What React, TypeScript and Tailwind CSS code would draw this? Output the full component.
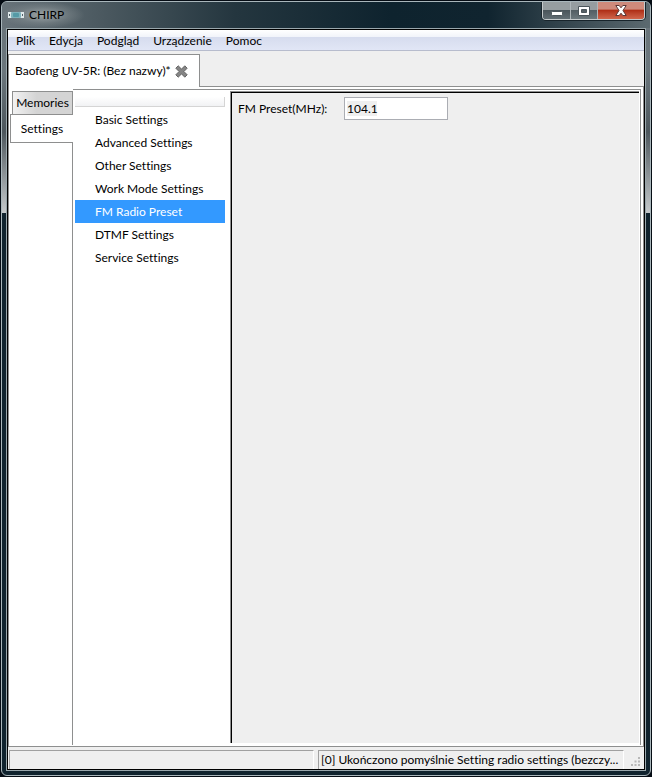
import { useState } from 'react';

const MENU_ITEMS = ['Plik', 'Edycja', 'Podgląd', 'Urządzenie', 'Pomoc'];

const CATEGORIES = [
  'Basic Settings',
  'Advanced Settings',
  'Other Settings',
  'Work Mode Settings',
  'FM Radio Preset',
  'DTMF Settings',
  'Service Settings',
];

function RadioIcon() {
  return (
    <svg width="16" height="8" viewBox="0 0 16 8" aria-hidden="true">
      <rect x="0" y="1" width="16" height="6" fill="#dfe8ea" />
      <rect x="3" y="1" width="10" height="6" rx="1" fill="#7fb2bb" />
      <rect x="5" y="2" width="6" height="4" rx="1" fill="#559aa6" />
      <path d="M1 3h1v2H1zM14 3h1v2h-1z" fill="#53646c" />
    </svg>
  );
}

function TitleBar() {
  return (
    <header className="flex h-[26px] shrink-0 items-start bg-[linear-gradient(90deg,#68737a,#4a585f_16%,#24363f_36%,#0e232e_60%,#10242f_75%,#5c6a70)]">
      <div className="flex h-full items-center gap-[5px] bg-[radial-gradient(ellipse_at_center,#9aa2a5_0%,#7e888c80_45%,transparent_72%)] pr-5 pl-[6px] text-black">
        <RadioIcon />
        <h1 className="leading-4">CHIRP</h1>
      </div>
      <div className="mr-[5px] ml-auto flex h-[18px] overflow-hidden rounded-b-[4px] border border-t-0 border-[#c5cacc] shadow-[0_0_0_1px_#18242b]">
        <button
          aria-label="Minimize"
          className="flex w-7 items-center justify-center border-r border-[#aeb6b9] bg-linear-to-b from-[#969da0] from-45% via-[#4a555b] via-50% to-[#626e74]"
        >
          <svg width="12" height="12" viewBox="0 0 12 12">
            <rect x=".5" y="6.5" width="11" height="4" rx="1" fill="#fff" stroke="#4c565c" />
          </svg>
        </button>
        <button
          aria-label="Maximize"
          className="flex w-[27px] items-center justify-center border-r border-[#aeb6b9] bg-linear-to-b from-[#969da0] from-45% via-[#535e64] via-50% to-[#6c787d]"
        >
          <svg width="12" height="10" viewBox="0 0 12 10">
            <path
              d="M.5.5h11v9H.5zM3.500 3.500v3h5v-3z"
              fill="#fff"
              fillRule="evenodd"
              stroke="#4c565c"
            />
          </svg>
        </button>
        <button
          aria-label="Close"
          className="flex w-[46px] items-center justify-center bg-linear-to-b from-[#cf8a7b] from-40% via-[#b02f17] via-50% to-[#d0654b]"
        >
          <svg width="12" height="11" viewBox="0 0 12 11">
            <path
              d="M.8.5h3.4L6 2.8 7.8.5h3.4L8 5.5l3.2 5H7.8L6 8.2l-1.8 2.3H.8L4 5.5z"
              fill="#fff"
              stroke="#5b3837"
            />
          </svg>
        </button>
      </div>
    </header>
  );
}

function MenuBar() {
  return (
    <nav className="flex h-[21px] shrink-0 items-center gap-[14px] border-b border-[#b7bccd] bg-[linear-gradient(#fff,#f1f4fa_35%,#d6dcee_36%,#e1e6f6)] px-2 pt-[2px]">
      {MENU_ITEMS.map((item) => (
        <button key={item} className="leading-4">
          {item}
        </button>
      ))}
    </nav>
  );
}

function CategoryList() {
  const [selected, setSelected] = useState('FM Radio Preset');

  return (
    <div className="w-[150px] shrink-0 pt-[7px]">
      <div className="mb-px h-[10px] border-r border-b border-[#d5d5d5] bg-linear-to-b from-white to-[#f1f2f4]" />
      <ul>
        {CATEGORIES.map((name) => (
          <li key={name}>
            <button
              onClick={() => setSelected(name)}
              className={`block h-[23px] w-full pl-5 text-left whitespace-nowrap ${
                selected === name ? 'bg-[#3399ff] text-white' : ''
              }`}
            >
              {name}
            </button>
          </li>
        ))}
      </ul>
    </div>
  );
}

function SettingsPane() {
  const [preset, setPreset] = useState('104.1');

  return (
    <section className="flex min-w-0 flex-1 border-t border-r border-[#8e8f8f] pl-[2px]">
      <CategoryList />
      <div className="mt-px mr-px mb-[2px] ml-[5px] flex min-w-0 flex-1 border-t border-l border-[#8e8f8f]">
        <form className="flex flex-1 items-start border-t border-l border-black bg-[#efefef] px-[6px] py-1">
          <label htmlFor="fm-preset" className="w-[106px] leading-6">
            FM Preset(MHz):
          </label>
          <input
            id="fm-preset"
            value={preset}
            onChange={(e) => setPreset(e.target.value)}
            className="h-[23px] w-[104px] border border-[#abadb3] bg-white bg-[linear-gradient(#efefef,#efefef)] bg-[length:30px_15px] bg-[position:2px_3px] bg-no-repeat px-[2px] outline-none"
          />
        </form>
      </div>
    </section>
  );
}

function StatusBar() {
  return (
    <footer className="flex h-[22px] shrink-0 gap-1 bg-[#efefef] pt-[3px] pl-px">
      <div className="min-w-0 flex-1 border-t border-r border-l border-[#a0a0a0] border-r-white" />
      <div className="min-w-[306px] border-t border-r border-l border-[#a0a0a0] border-r-white px-[2px] leading-[18px] whitespace-nowrap">
        [0] Ukończono pomyślnie Setting radio settings (bezczy...
      </div>
      <div className="flex w-4 items-end justify-end pr-1 pb-[3px]">
        <svg width="9" height="9" viewBox="0 0 9 9" fill="#b8b8b8" aria-hidden="true">
          <path d="M7 0h2v2H7zM3.500 3.500h2v2h-2zM7 3.500h2v2H7zM0 7h2v2H0zM3.500 7h2v2h-2zM7 7h2v2H7z" />
        </svg>
      </div>
    </footer>
  );
}

export default function App() {
  return (
    <div className="h-screen bg-[#050c14] p-px font-['Lato','Noto_Sans',sans-serif] text-[12px] text-black [font-variant-ligatures:none]">
      <div className="flex h-full flex-col overflow-hidden rounded-[6px] border border-[#a9b6bb] bg-[linear-gradient(#68737a,#6b767c_70px,#4d575d_130px,#c5c9cb_211px,#10232e_211px)]">
        <TitleBar />
        <main className="mx-1 mb-1 flex min-h-0 flex-1 flex-col border border-[#9aa7ac]">
          <div className="flex min-h-0 flex-1 flex-col border border-black bg-[#efefef]">
            <MenuBar />

            <div className="flex h-9 shrink-0 pt-[3px]">
              <div className="flex h-full items-center gap-1 border-t border-r border-l border-[#8e8f8f] bg-white pr-[11px] pl-[6px]">
                <span className="whitespace-nowrap">Baofeng UV-5R: (Bez nazwy)*</span>
                <button aria-label="Close tab">
                  <svg width="13" height="13" viewBox="0 0 13 13">
                    <path
                      d="M3.200.8 6.500 4.100 9.800.8l2.400 2.400-3.300 3.300 3.300 3.300-2.400 2.400-3.300-3.300-3.300 3.300L.8 9.800l3.300-3.300L.8 3.200z"
                      fill="#858585"
                      stroke="#666"
                    />
                  </svg>
                </button>
              </div>
              <div className="flex-1 border-b border-[#8e8f8f]" />
            </div>

            <div className="flex min-h-0 flex-1 border-r border-b border-l border-[#8e8f8f] bg-white pt-[2px] pr-[2px] pb-px">
              <div className="flex w-16 shrink-0 flex-col pt-[2px]">
                <button className="ml-[3px] h-[23px] border-t border-r border-l border-[#8e8f8f] bg-linear-to-r from-[#f2f2f2] to-[#d4d4d4] to-40% whitespace-nowrap">
                  Memories
                </button>
                <button className="ml-px h-[29px] border-t border-b border-l border-[#8e8f8f] bg-white">
                  Settings
                </button>
                <div className="flex-1 border-r border-[#8e8f8f]" />
              </div>
              <SettingsPane />
            </div>

            <StatusBar />
          </div>
        </main>
      </div>
    </div>
  );
}
